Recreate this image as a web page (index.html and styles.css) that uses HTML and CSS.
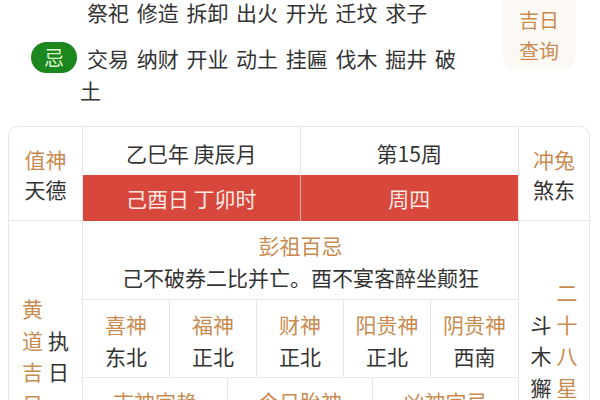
FILE: index.html
```html
<!DOCTYPE html>
<html lang="zh-CN">
<head>
<meta charset="utf-8">
<link rel="stylesheet" href="styles.css">
</head>
<body>
<div class="top">
  <div class="yiji">
    <div class="yj-row">
      <span class="badge-slot"></span>
      <p class="words">祭祀 修造 拆卸 出火 开光 迁坟 求子</p>
    </div>
    <div class="yj-row">
      <span class="badge-slot"><span class="badge">忌</span></span>
      <p class="words">交易 纳财 开业 动土 挂匾 伐木 掘井 破土</p>
    </div>
  </div>
  <div class="query">吉日<br>查询</div>
</div>

<div class="almanac">
  <div class="side side-top">
    <span class="label">值神</span>
    <span class="value">天德</span>
  </div>
  <div class="center-top">
    <div class="head-cell">乙巳年 庚辰月</div>
    <div class="head-cell">第15周</div>
    <div class="red-cell">己酉日 丁卯时</div>
    <div class="red-cell">周四</div>
  </div>
  <div class="side side-top side-right">
    <span class="label">冲兔</span>
    <span class="value">煞东</span>
  </div>

  <div class="side side-low">
    <div class="vcol label">黄道吉日</div>
    <div class="vcol value">执日</div>
  </div>
  <div class="center-low">
    <div class="pengzu">
      <div class="label">彭祖百忌</div>
      <div class="value">己不破券二比并亡。酉不宴客醉坐颠狂</div>
    </div>
    <div class="gods">
      <div class="god"><div class="label">喜神</div><div class="value">东北</div></div>
      <div class="god"><div class="label">福神</div><div class="value">正北</div></div>
      <div class="god"><div class="label">财神</div><div class="value">正北</div></div>
      <div class="god"><div class="label">阳贵神</div><div class="value">正北</div></div>
      <div class="god"><div class="label">阴贵神</div><div class="value">西南</div></div>
    </div>
    <div class="more">
      <div class="more-cell"><div class="label">吉神宜趋</div></div>
      <div class="more-cell"><div class="label">今日胎神</div></div>
      <div class="more-cell"><div class="label">凶神宜忌</div></div>
    </div>
  </div>
  <div class="side side-low side-right">
    <div class="vcol value">斗木獬</div>
    <div class="vcol label">二十八星宿</div>
  </div>
</div>
</body>
</html>
```

FILE: styles.css
```css
* { box-sizing: border-box; }

html, body {
  margin: 0;
  padding: 0;
  background: #ffffff;
  overflow: hidden;
}

body {
  width: 600px;
  height: 400px;
  font-family: "Noto Sans CJK SC", "Noto Sans", sans-serif;
  font-size: 21px;
  color: #333333;
}

.label { color: #c98b50; }
.value { color: #333333; }

/* top: yi / ji lists */
.top {
  display: flex;
  align-items: flex-start;
  margin-top: -4px;
}

.yiji {
  width: 470px;
  display: flex;
  flex-direction: column;
  gap: 14px;
}

.yj-row {
  display: flex;
  align-items: flex-start;
}

.badge-slot {
  width: 80px;
  flex: none;
  padding-left: 31px;
}

.badge {
  display: flex;
  align-items: center;
  justify-content: center;
  width: 46px;
  height: 31px;
  border-radius: 16px;
  background: #1d871f;
  color: #d8f3cc;
  font-size: 20px;
  line-height: 1;
}

.words {
  margin: 0;
  flex: 1;
  line-height: 32px;
  text-indent: 7px;
  word-spacing: 3px;
  color: #333333;
}

.query {
  margin-left: 34px;
  margin-top: -8px;
  width: 70px;
  padding: 16px 0 2px;
  font-size: 20px;
  line-height: 31px;
  text-align: center;
  color: #c98b50;
  background: #fcf9f5;
  border-radius: 9px;
  box-shadow: 0 0 3px rgba(0, 0, 0, 0.06);
}

/* almanac table */
.almanac {
  margin: 20px 10px 0 8px;
  border: 1px solid #e6e6e6;
  border-radius: 10px;
  overflow: hidden;
  display: grid;
  grid-template-columns: 74px 436px 1fr;
}

.side {
  display: flex;
  align-items: center;
  justify-content: center;
  border-right: 1px solid #e6e6e6;
}

.side-right { border-right: none; }

.side-top {
  flex-direction: column;
  line-height: 30px;
  border-bottom: 1px solid #e6e6e6;
}

.center-top {
  display: grid;
  grid-template-columns: 1fr 1fr;
  border-right: 1px solid #e6e6e6;
}

.head-cell {
  height: 48px;
  padding-top: 6px;
  line-height: 40px;
  text-align: center;
}

.head-cell:first-child { border-right: 1px solid #e6e6e6; }

.red-cell {
  height: 46px;
  line-height: 46px;
  text-align: center;
  background: #d8473c;
  color: #fde9e4;
}

.red-cell:nth-child(3) { border-right: 1px solid #f2b2a8; }

.side-low {
  gap: 5px;
  line-height: 31.5px;
  height: 270px;
}

.vcol {
  width: 21px;
  text-align: center;
  word-break: break-all;
}

.center-low {
  border-right: 1px solid #e6e6e6;
}

.pengzu {
  height: 79px;
  padding-top: 8px;
  line-height: 32px;
  text-align: center;
  border-bottom: 1px solid #e6e6e6;
}

.gods {
  display: grid;
  grid-template-columns: repeat(5, 1fr);
  border-bottom: 1px solid #e6e6e6;
}

.god {
  height: 77px;
  padding-top: 8px;
  line-height: 32px;
  text-align: center;
  border-right: 1px solid #e6e6e6;
}

.god:last-child { border-right: none; }

.more {
  display: grid;
  grid-template-columns: repeat(3, 1fr);
}

.more-cell {
  height: 112px;
  padding-top: 7px;
  line-height: 32px;
  text-align: center;
  border-right: 1px solid #e6e6e6;
}

.more-cell:last-child { border-right: none; }
```
